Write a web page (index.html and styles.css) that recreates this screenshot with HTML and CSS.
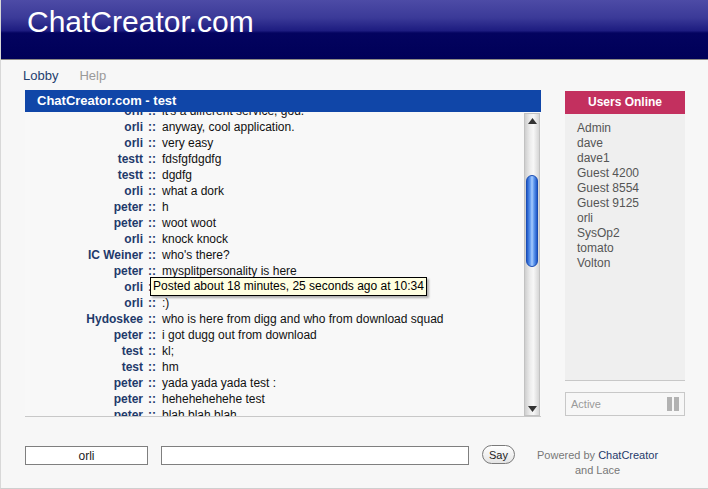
FILE: index.html
```html
<!DOCTYPE html>
<html lang="en">
<head>
  <meta charset="UTF-8">
  <title>ChatCreator.com - test</title>
  <link rel="stylesheet" href="styles.css">
</head>
<body>
  <div class="page">
    <div class="header">
      <h1>ChatCreator.com</h1>
    </div>

    <div class="nav">
      <a href="#" class="active">Lobby</a>
      <a href="#">Help</a>
    </div>

    <div class="main">
      <div class="chat">
        <div class="chat-title">ChatCreator.com - test</div>
        <div class="messages">
          <div class="list">
            <div class="msgs">
              <div class="row"><span class="name">orli</span><span class="sep">::</span><span class="text">it's a different service, god.</span></div>
              <div class="row"><span class="name">orli</span><span class="sep">::</span><span class="text">anyway, cool application.</span></div>
              <div class="row"><span class="name">orli</span><span class="sep">::</span><span class="text">very easy</span></div>
              <div class="row"><span class="name">testt</span><span class="sep">::</span><span class="text">fdsfgfdgdfg</span></div>
              <div class="row"><span class="name">testt</span><span class="sep">::</span><span class="text">dgdfg</span></div>
              <div class="row"><span class="name">orli</span><span class="sep">::</span><span class="text">what a dork</span></div>
              <div class="row"><span class="name">peter</span><span class="sep">::</span><span class="text">h</span></div>
              <div class="row"><span class="name">peter</span><span class="sep">::</span><span class="text">woot woot</span></div>
              <div class="row"><span class="name">orli</span><span class="sep">::</span><span class="text">knock knock</span></div>
              <div class="row"><span class="name">IC Weiner</span><span class="sep">::</span><span class="text">who's there?</span></div>
              <div class="row"><span class="name">peter</span><span class="sep">::</span><span class="text">mysplitpersonality is here</span></div>
              <div class="row"><span class="name">orli</span><span class="sep">::</span><span class="text">i am here too</span></div>
              <div class="row"><span class="name">orli</span><span class="sep">::</span><span class="text">:)</span></div>
              <div class="row"><span class="name">Hydoskee</span><span class="sep">::</span><span class="text">who is here from digg and who from download squad</span></div>
              <div class="row"><span class="name">peter</span><span class="sep">::</span><span class="text">i got dugg out from download</span></div>
              <div class="row"><span class="name">test</span><span class="sep">::</span><span class="text">kl;</span></div>
              <div class="row"><span class="name">test</span><span class="sep">::</span><span class="text">hm</span></div>
              <div class="row"><span class="name">peter</span><span class="sep">::</span><span class="text">yada yada yada test :</span></div>
              <div class="row"><span class="name">peter</span><span class="sep">::</span><span class="text">hehehehehehe test</span></div>
              <div class="row"><span class="name">peter</span><span class="sep">::</span><span class="text">blah blah blah</span></div>
            </div>
            <div class="tooltip">Posted about 18 minutes, 25 seconds ago at 10:34</div>
          </div>

          <div class="scrollbar">
            <div class="scroll-btn">
              <svg width="9" height="6" viewBox="0 0 9 6"><polygon points="4.5,0 9,6 0,6" fill="#333"/></svg>
            </div>
            <div class="track">
              <div class="thumb"></div>
            </div>
            <div class="scroll-btn">
              <svg width="9" height="6" viewBox="0 0 9 6"><polygon points="0,0 9,0 4.5,6" fill="#333"/></svg>
            </div>
          </div>
        </div>
      </div>

      <div class="side">
        <div class="side-title">Users Online</div>
        <div class="users">
          <div>Admin</div>
          <div>dave</div>
          <div>dave1</div>
          <div>Guest 4200</div>
          <div>Guest 8554</div>
          <div>Guest 9125</div>
          <div>orli</div>
          <div>SysOp2</div>
          <div>tomato</div>
          <div>Volton</div>
        </div>
        <div class="status">
          <span>Active</span>
          <span class="pause"><i></i><i></i></span>
        </div>
      </div>
    </div>

    <div class="footer">
      <input class="nick" type="text" value="orli">
      <input class="say-input" type="text" value="">
      <button class="say">Say</button>
      <div class="powered">Powered by <a href="#">ChatCreator</a><br><span>and Lace</span></div>
    </div>
  </div>
</body>
</html>
```

FILE: styles.css
```css
body {
  margin: 0;
  padding: 0;
  font-family: "Liberation Sans", Arial, sans-serif;
  background-color: #f7f7f7;
  color: #222;
  overflow: hidden;
}

.page {
  height: 489px;
  box-sizing: border-box;
  border-left: 1px solid #d8d8d8;
  border-bottom: 1px solid #cfcfcf;
}

.header {
  height: 59px;
  border-bottom: 1px solid #8c8a86;
  background: linear-gradient(#4d4ba6 0%, #3b3a98 30%, #1d1c80 52%, #03035f 56%, #000058 100%);
}

.header h1 {
  margin: 0;
  padding: 7px 0 0 26px;
  font-size: 30px;
  line-height: 30px;
  font-weight: normal;
  color: #fff;
}

.nav {
  display: flex;
  gap: 21px;
  padding: 8px 0 6px 22px;
  height: 16px;
  font-size: 13px;
  line-height: 16px;
}

.nav a {
  text-decoration: none;
  color: #9a9a9a;
}

.nav a.active {
  color: #24406f;
}

.main {
  display: flex;
  align-items: flex-start;
  padding-left: 24px;
}

.chat {
  width: 516px;
}

.chat-title {
  height: 22px;
  line-height: 22px;
  padding-left: 12px;
  background-color: #1046a8;
  color: #fff;
  font-size: 13px;
  font-weight: bold;
}

.messages {
  display: flex;
  height: 304px;
  border-bottom: 1px solid #c8c8c8;
  background-color: #f8f8f8;
}

.list {
  flex: 1;
  position: relative;
  overflow: hidden;
}

.msgs {
  margin-top: -9px;
}

.row {
  display: flex;
  height: 16px;
  line-height: 16px;
  font-size: 12px;
  white-space: nowrap;
}

.row .name {
  width: 118px;
  text-align: right;
  font-weight: bold;
  color: #1f3a6b;
}

.row .sep {
  padding: 0 6px 0 5px;
  font-weight: bold;
  color: #1f3a6b;
}

.row .text {
  color: #111;
}

.tooltip {
  position: absolute;
  left: 125px;
  top: 165px;
  padding: 1px 2px;
  line-height: 15px;
  font-size: 12px;
  color: #000;
  background-color: #ffffe1;
  border: 1px solid #000;
  box-shadow: 2px 2px 2px rgba(0, 0, 0, 0.3);
  white-space: nowrap;
}

.scrollbar {
  display: flex;
  flex-direction: column;
  width: 14px;
  margin: 1px 1px 0 0;
  border: 1px solid #c2c2c2;
  background: linear-gradient(to right, #cfcfcf, #ececec 35%, #f7f7f7 60%, #d6d6d6);
}

.scroll-btn {
  height: 13px;
  display: flex;
  align-items: center;
  justify-content: center;
}

.track {
  flex: 1;
  padding-top: 48px;
}

.thumb {
  height: 92px;
  margin: 0 1px;
  border: 1px solid #1a4db4;
  border-radius: 7px;
  box-sizing: border-box;
  background: linear-gradient(to right, #2058c8, #5d97ee 30%, #a8ccff 50%, #5d97ee 70%, #2058c8);
}

.side {
  width: 120px;
  margin: 1px 0 0 24px;
}

.side-title {
  height: 23px;
  line-height: 23px;
  text-align: center;
  background-color: #c3305f;
  color: #fff;
  font-size: 12px;
  font-weight: bold;
}

.users {
  height: 252px;
  padding: 7px 12px;
  background-color: #efefef;
  border-bottom: 1px solid #c8c8c8;
  font-size: 12px;
  line-height: 15px;
  color: #555;
}

.status {
  display: flex;
  align-items: center;
  justify-content: space-between;
  margin-top: 11px;
  height: 22px;
  padding: 0 5px;
  border: 1px solid #c8c8c8;
  font-size: 11px;
  color: #9a9a9a;
}

.pause {
  display: flex;
  gap: 2px;
}

.pause i {
  display: block;
  width: 5px;
  height: 14px;
  background-color: #b2b2b2;
}

.footer {
  display: flex;
  align-items: flex-start;
  margin-top: 29px;
  padding-left: 24px;
}

.footer input {
  height: 19px;
  box-sizing: border-box;
  border: 1px solid #7f7f7f;
  background-color: #fff;
  font-family: "Liberation Sans", Arial, sans-serif;
  font-size: 12px;
  color: #222;
  padding: 0 4px;
}

.nick {
  width: 123px;
  text-align: center;
}

.say-input {
  width: 308px;
  margin-left: 13px;
}

.say {
  width: 33px;
  height: 19px;
  margin: -1px 0 0 13px;
  padding: 0;
  border: 1px solid #7a7a7a;
  border-radius: 10px;
  background: linear-gradient(#ffffff, #e4e4e4);
  font-family: "Liberation Sans", Arial, sans-serif;
  font-size: 11px;
  color: #222;
}

.powered {
  margin: 2px 0 0 22px;
  text-align: center;
  font-size: 11px;
  line-height: 15px;
  color: #777;
}

.powered a {
  text-decoration: none;
  color: #1f3a6b;
}

.powered span {
  color: #777;
}
```
